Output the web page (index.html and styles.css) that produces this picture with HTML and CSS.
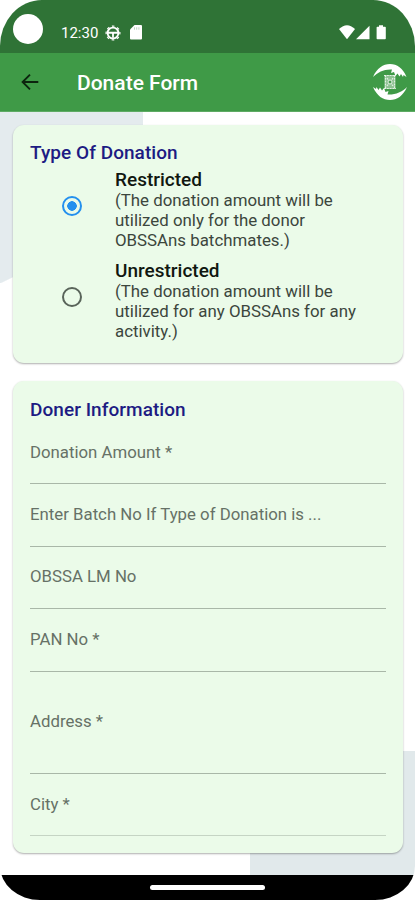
FILE: index.html
```html
<!DOCTYPE html>
<html lang="en">
<head>
<meta charset="utf-8">
<title>Donate Form</title>
<link rel="stylesheet" href="styles.css">
</head>
<body>
<div class="phone">
  <header class="status">
    <span class="camera"></span>
    <span class="time">12:30</span>
    <svg class="wheel" viewBox="0 0 16 16"><circle cx="8" cy="8" r="5.400" fill="none" stroke="#fff" stroke-width="1.900"/><circle cx="8" cy="8" r="6.900" fill="none" stroke="#fff" stroke-width="1.200" stroke-dasharray="2.700 2.720" stroke-dashoffset="1.350"/><path d="M3 6.800h10v2H8.900v4H7.100v-4H3z" fill="#fff"/></svg>
    <svg class="sdcard" viewBox="0 0 12 15"><path d="M4.500 0H11q1 0 1 1v12.500q0 1-1 1H1q-1 0-1-1V4.500z" fill="#fff"/><path d="M4.500 2.300v2.400M6.700 2.300v2.400M8.900 2.300v2.400" stroke="#b5cfb8" stroke-width=".9"/></svg>
    <svg class="signals" viewBox="0 0 48 15"><path d="M0 4Q8-3.600 16 4L8 14.300z" fill="#fff"/><path d="M30.500.8v13.500H17z" fill="#fff"/><path d="M40 .2h4v1.500h2q.8 0 .8.8v11q0 .8-.8.8h-7.600q-.8 0-.8-.8v-11q0-.8.8-.8H40z" fill="#fff"/></svg>
  </header>
  <div class="appbar">
    <svg class="back" viewBox="0 0 18 18"><path d="M17.300 9H2M9 1.600L1.600 9 9 16.400" fill="none" stroke="#0c240e" stroke-width="1.900"/></svg>
    <h1>Donate Form</h1>
    <svg class="logo" viewBox="0 0 36 38">
      <path d="M1 14C5 5 11 1 18 1s13 4 16.500 13l-3-2-.5 2-2-3-1.500 2.500-2-3-2 2.500-1.500-4-3 1 1-3.500C12 6 6 9 1 14z" fill="#fff"/>
      <path d="M35 24C31 33 25 37 18 37S5 33 1 24l3 2 .5-2 2 3L8 24.500l2 3 2-2.500 1.500 4 3-1-1 3.500C23 32 30 29 35 24z" fill="#fff"/>
      <rect x="12.500" y="12" width="11" height="14" fill="#8fc293"/>
      <path d="M12 12.500h12M12 25.500h12M13.500 12v14M22.500 12v14M15 15l6 8M21 15l-6 8" stroke="#e2f1e3" stroke-width="1.200" stroke-dasharray="2 .8"/>
      <circle cx="18" cy="19" r="2" fill="#489d50" stroke="#e2f1e3"/>
    </svg>
  </div>
  <main class="content">
    <section class="card types">
      <h2>Type Of Donation</h2>
      <div class="option">
        <span class="radio checked"></span>
        <div class="copy"><strong>Restricted</strong><p>(The donation amount will be<br>utilized only for the donor<br>OBSSAns batchmates.)</p></div>
      </div>
      <div class="option">
        <span class="radio"></span>
        <div class="copy"><strong>Unrestricted</strong><p>(The donation amount will be<br>utilized for any OBSSAns for any<br>activity.)</p></div>
      </div>
    </section>
    <section class="card info">
      <h2>Doner Information</h2>
      <div class="field">Donation Amount *</div>
      <div class="field">Enter Batch No If Type of Donation is ...</div>
      <div class="field">OBSSA LM No</div>
      <div class="field">PAN No *</div>
      <div class="field tall">Address *</div>
      <div class="field last">City *</div>
    </section>
  </main>
  <footer class="navbar"><span class="handle"></span></footer>
</div>
</body>
</html>
```
FILE: styles.css
```css
* { box-sizing: border-box; }
body { margin: 0; background: #fff; font-family: Roboto, sans-serif; }
h1, h2, p { margin: 0; }
.phone {
  width: 415px;
  height: 900px;
  display: flex;
  flex-direction: column;
  overflow: hidden;
  border-radius: 42px 42px 40px 40px / 46px 46px 34px 34px;
}
.status {
  height: 53px;
  flex: none;
  display: flex;
  align-items: center;
  padding: 12px 28px 0 13px;
  background: #2f7336;
  color: #fff;
}
.camera {
  width: 30px;
  height: 30px;
  margin-top: -8px;
  border-radius: 50%;
  background: #fff;
}
.time { margin-left: 18px; width: 44px; font-size: 15px; white-space: nowrap; }
.wheel { width: 16px; height: 16px; }
.sdcard { width: 12px; height: 15px; margin-left: 9px; }
.signals { width: 48px; height: 15px; margin-left: auto; }
.appbar {
  height: 59px;
  flex: none;
  display: flex;
  align-items: center;
  padding: 0 7px 0 21px;
  background: #3f9a47;
  border-bottom: 1px solid #5eab64;
}
.back { width: 18px; height: 18px; }
h1 { margin: 2px 0 0 38px; color: #fff; font-size: 21px; font-weight: 500; line-height: 24px; }
.logo { width: 36px; height: 38px; margin-left: auto; }
.content {
  flex: 1;
  min-height: 0;
  display: flex;
  flex-direction: column;
  gap: 18px;
  padding: 13px 12px 0 13px;
  background:
    linear-gradient(154deg, #e4ebee 0 71%, transparent 71.5%) 0 0 / 143px 171px no-repeat,
    linear-gradient(#e1e9eb, #e1e9eb) 100% 100% / 165px 124px no-repeat,
    #fff;
}
.card {
  padding: 18px 17px 0;
  border-radius: 11px;
  background: #ebfbe9;
  box-shadow: 0 1px 2px rgba(0, 0, 0, .32);
}
.types { height: 238px; }
.info { height: 472px; }
h2 { height: 20px; color: #1d1b83; font-size: 19px; font-weight: 500; line-height: 20px; letter-spacing: .05px; }
.option { display: flex; height: 81px; margin-top: 7px; padding-left: 32px; }
.option + .option { margin-top: 10px; }
.radio {
  width: 20px;
  height: 20px;
  margin: 26px 33px 0 0;
  flex: none;
  border: 2px solid #59645a;
  border-radius: 50%;
}
.checked { border-color: #2490ee; background: radial-gradient(circle, #2490ee 0 4.500px, transparent 5px); }
.copy { color: #3c463d; font-size: 16.850px; line-height: 20px; white-space: nowrap; }
.copy strong { display: block; color: #101710; font-size: 19px; font-weight: 500; }
.field {
  height: 62.400px;
  padding-top: 19.500px;
  border-bottom: 1px solid #a9b7a8;
  color: #667166;
  font-size: 16.800px;
  line-height: 20px;
  white-space: nowrap;
}
.info { padding-top: 19px; }
.info h2 { margin-bottom: 2px; }
.tall { height: 102.500px; padding-top: 39px; }
.last { border-color: #c5d4c4; }
.navbar {
  height: 25px;
  flex: none;
  display: flex;
  align-items: center;
  justify-content: center;
  background: #000;
}
.handle { width: 115px; height: 5px; border-radius: 3px; background: #fff; }
```
